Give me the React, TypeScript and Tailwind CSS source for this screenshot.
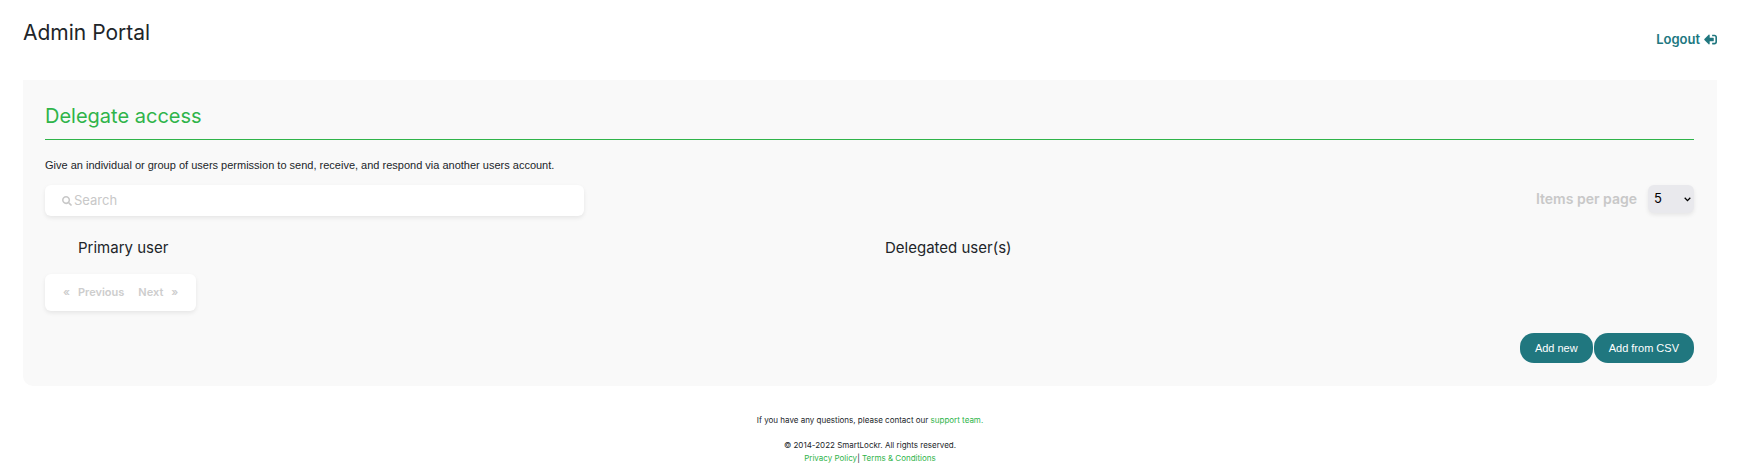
import { useState } from "react";
import type { ReactNode } from "react";
import { FaSearch, FaSignOutAlt } from "react-icons/fa";

const PAGE_SIZES = [5, 10, 20, 50];

// ── Header ────────────────────────────────────────────────────────────────────

function Header() {
  return (
    <header className="flex h-20 items-start justify-between pt-[21px]">
      <h1 className="text-[21px] leading-6">Admin Portal</h1>
      <a href="#logout" className="mt-1.5 flex items-center gap-1 text-[13px] leading-6 font-semibold text-[#20777f]">
        Logout
        <FaSignOutAlt className="-scale-x-100" size={13} />
      </a>
    </header>
  );
}

// ── Toolbar ───────────────────────────────────────────────────────────────────

function SearchBox({ value, onChange }: { value: string; onChange: (val: string) => void }) {
  return (
    <label className="flex h-[31px] w-full max-w-[539px] items-center gap-0.5 rounded-md bg-white px-[17px] text-[#c8c8c8] shadow-[0_2px_4px_rgba(0,0,0,0.08)]">
      <FaSearch size={10} className="shrink-0" />
      <input
        type="text"
        aria-label="Search"
        placeholder="Search"
        value={value}
        onChange={(e) => onChange(e.target.value)}
        className="w-full bg-transparent text-[13px] text-[#212529] outline-none placeholder:text-[#c8c8c8]"
      />
    </label>
  );
}

function PageSizeSelect({ value, onChange }: { value: number; onChange: (val: number) => void }) {
  return (
    <div className="flex items-center gap-[11px]">
      <label htmlFor="page-size" className="text-[14px] leading-5 font-semibold text-[#c8c8c8]">
        Items per page
      </label>
      <div className="relative">
        <select
          id="page-size"
          value={value}
          onChange={(e) => onChange(Number(e.target.value))}
          className="block h-7 w-[46px] appearance-none rounded-md bg-[#e9e9ed] pl-1.5 text-[13px] text-black shadow-[0_2px_4px_rgba(0,0,0,0.08)]"
        >
          {PAGE_SIZES.map((size) => (
            <option key={size} value={size}>{size}</option>
          ))}
        </select>
        <svg
          className="pointer-events-none absolute top-3 right-[3px]"
          width="7"
          height="5"
          viewBox="0 0 7 5"
          fill="none"
        >
          <path d="M0.7 0.8L3.5 3.6L6.3 0.8" stroke="#000" strokeWidth="1.3" />
        </svg>
      </div>
    </div>
  );
}

// ── Pagination ────────────────────────────────────────────────────────────────

function Pagination() {
  return (
    <nav className="flex h-[37px] w-fit items-center gap-3.5 rounded-md bg-white px-[18px] text-[11px] font-semibold text-[#cdcdcd] shadow-[0_2px_4px_rgba(0,0,0,0.08)]">
      <button type="button" disabled className="flex gap-2">
        <span>«</span>Previous
      </button>
      <button type="button" disabled className="flex gap-2">
        Next<span>»</span>
      </button>
    </nav>
  );
}

function PillButton({ children }: { children: ReactNode }) {
  return (
    <button
      type="button"
      className="h-[30px] rounded-[14px] bg-[#20777f] px-[15px] font-['Liberation_Sans',sans-serif] text-[11px] text-white"
    >
      {children}
    </button>
  );
}

// ── Footer ────────────────────────────────────────────────────────────────────

function Footer() {
  return (
    <footer className="pt-7 text-center text-[8px] leading-[13px]">
      <p>
        If you have any questions, please contact our{" "}
        <a href="#support" className="text-[#2fb44a]">support team.</a>
      </p>
      <p className="mt-3">© 2014-2022 SmartLockr. All rights reserved.</p>
      <p>
        <a href="#privacy" className="text-[#2fb44a]">Privacy Policy</a>
        {"| "}
        <a href="#terms" className="text-[#2fb44a]">Terms &amp; Conditions</a>
      </p>
    </footer>
  );
}

// ── Page ──────────────────────────────────────────────────────────────────────

export default function App() {
  const [search, setSearch] = useState("");
  const [pageSize, setPageSize] = useState(5);

  return (
    <div className="min-h-screen bg-white pr-[22px] pl-[23px] font-[Inter,sans-serif] text-[#212529]">
      <Header />

      <main className="rounded-b-[10px] bg-[#f9f9f9] pt-6 pr-[23px] pb-[23px] pl-[22px]">
        <h2 className="border-b border-[#2fb44a] pb-[11px] text-[20px] leading-6 text-[#2fb44a]">
          Delegate access
        </h2>
        <p className="mt-[17px] font-['Liberation_Sans',sans-serif] text-[11px] leading-4">
          Give an individual or group of users permission to send, receive, and respond via another users account.
        </p>

        <div className="mt-3 flex items-start justify-between">
          <SearchBox value={search} onChange={setSearch} />
          <PageSizeSelect value={pageSize} onChange={setPageSize} />
        </div>

        <table className="mt-5 w-full table-fixed text-left text-[15px] leading-6">
          <thead>
            <tr>
              <th scope="col" className="w-[49%] pl-[33px] font-normal">Primary user</th>
              <th scope="col" className="pl-8 font-normal">Delegated user(s)</th>
            </tr>
          </thead>
        </table>

        <div className="mt-3.5">
          <Pagination />
        </div>

        <div className="mt-[22px] flex justify-end gap-px">
          <PillButton>Add new</PillButton>
          <PillButton>Add from CSV</PillButton>
        </div>
      </main>

      <Footer />
    </div>
  );
}
